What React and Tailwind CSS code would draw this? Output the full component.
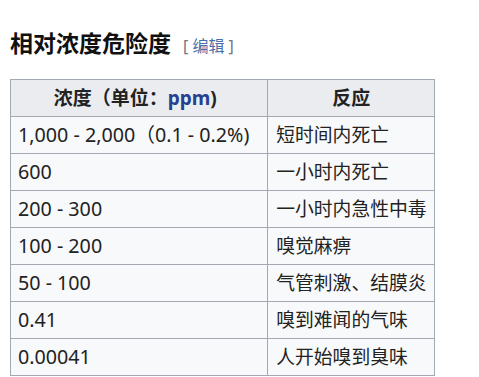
export default function App() {
  const rows = [
    ["1,000 - 2,000（0.1 - 0.2%)", "短时间内死亡"],
    ["600", "一小时内死亡"],
    ["200 - 300", "一小时内急性中毒"],
    ["100 - 200", "嗅觉麻痹"],
    ["50 - 100", "气管刺激、结膜炎"],
    ["0.41", "嗅到难闻的气味"],
    ["0.00041", "人开始嗅到臭味"],
  ];
  const font = { fontFamily: '"Noto Sans", "Noto Sans CJK SC", sans-serif' };
  return (
    <div className="w-[479px] h-[377px] bg-white overflow-hidden text-[#222]" style={font}>
      <div className="flex items-baseline pl-[10px] pt-[28px] h-[79px]">
        <h2 className="text-[23px] font-bold leading-[30px] text-[#111]">相对浓度危险度</h2>
        <span className="ml-[12px] text-[16px] text-[#72777d]">
          [ <span className="text-[#4a6ea8]">编辑</span> ]
        </span>
      </div>
      <table className="ml-[10px] w-[425px] border-collapse" style={font}>
        <colgroup>
          <col className="w-[258px]" />
          <col className="w-[167px]" />
        </colgroup>
        <thead>
          <tr className="h-[37px] bg-[#eaecf0]">
            <th className="border border-[#a2a9b1] font-bold text-center pl-[2px] pr-[10px] py-0 text-[19px] text-[#222]">
              浓度（单位：<span className="text-[#25408f]">ppm</span>)
            </th>
            <th className="border border-[#a2a9b1] font-bold text-center px-[7px] py-0 text-[19px] text-[#222]">反应</th>
          </tr>
        </thead>
        <tbody>
          {rows.map(([a, b]) => (
            <tr key={a} className="h-[37px] bg-[#f8f9fa]">
              <td className="border border-[#a2a9b1] pl-[7px] pr-0 py-0 whitespace-nowrap text-[19.7px] text-[#222]">{a}</td>
              <td className="border border-[#a2a9b1] pl-[8px] pr-0 py-0 whitespace-nowrap text-[18.8px] text-[#222]">{b}</td>
            </tr>
          ))}
        </tbody>
      </table>
    </div>
  );
}
